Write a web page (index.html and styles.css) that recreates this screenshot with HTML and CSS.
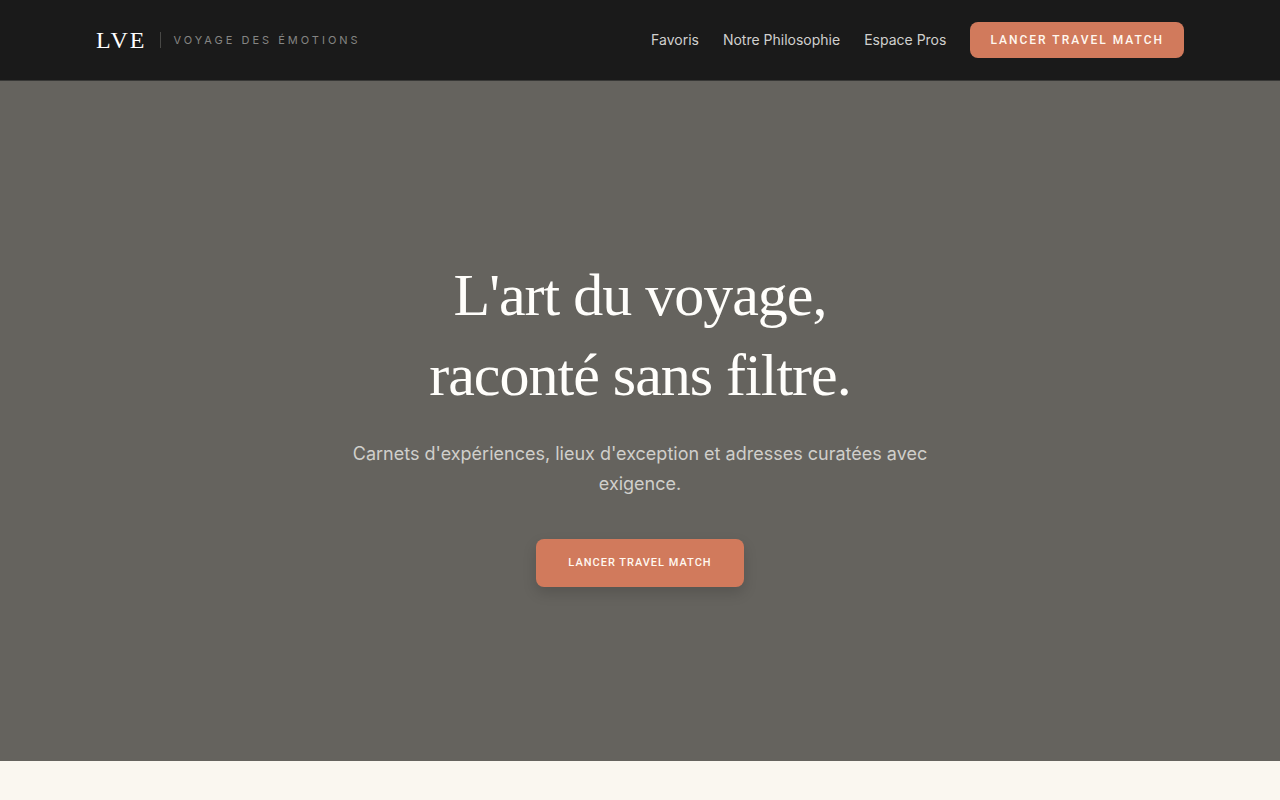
FILE: index.html
```html
<!DOCTYPE html>
<html lang="fr">
<head>
    <meta charset="UTF-8">
    <meta name="viewport" content="width=device-width, initial-scale=1">
    <title>LVE - Voyage des émotions</title>
    <link rel="stylesheet" href="styles.css">
</head>
<body>
<header class="header">
    <div class="header-inner">
        <a class="brand" href="#">
            <span class="logo">LVE</span>
            <span class="tagline">Voyage des émotions</span>
        </a>
        <nav class="nav">
            <a href="#">Favoris</a>
            <a href="#">Notre Philosophie</a>
            <a href="#">Espace Pros</a>
            <button class="btn btn-small" type="button">Lancer Travel Match</button>
        </nav>
    </div>
</header>
<main>
    <section class="hero">
        <h1>L'art du voyage,<br>raconté sans filtre.</h1>
        <p>Carnets d'expériences, lieux d'exception et adresses curatées avec exigence.</p>
        <button class="btn btn-large" type="button">Lancer Travel Match</button>
    </section>
</main>
</body>
</html>
```
FILE: styles.css
```css
*{
    margin: 0;
    padding: 0;
    box-sizing: border-box;
}
body{
    background: #faf7f0;
    color: #1a1a1a;
    font-family: Inter, "Liberation Sans", sans-serif;
}
a{
    color: inherit;
    text-decoration: none;
}
.header{
    background: #1a1a1a;
    border-bottom: 1px solid #383836;
}
.header-inner{
    display: flex;
    align-items: center;
    justify-content: space-between;
    max-width: 1152px;
    min-height: 80px;
    margin: 0 auto;
    padding: 0 32px;
}
.brand{
    display: flex;
    align-items: center;
    gap: 14px;
}
.logo{
    color: #fff;
    font-family: "Liberation Serif", serif;
    font-size: 24px;
    line-height: 32px;
    letter-spacing: 2px;
}
.tagline{
    padding-left: 12px;
    border-left: 1px solid #484846;
    color: #858583;
    font-size: 11px;
    line-height: 16px;
    letter-spacing: 3px;
    text-transform: uppercase;
}
.nav{
    display: flex;
    align-items: center;
    gap: 24px;
    color: #d0d0ce;
    font-size: 14px;
    line-height: 20px;
}
.btn{
    border: none;
    border-radius: 8px;
    background: #d17a5c;
    color: #fff8f0;
    font-family: Roboto, sans-serif;
    font-weight: 500;
    text-transform: uppercase;
    cursor: pointer;
}
.btn-small{
    padding: 10px 20px;
    font-size: 12px;
    line-height: 16px;
    letter-spacing: 2px;
}
.btn-large{
    padding: 16px 32px;
    font-size: 11px;
    line-height: 16px;
    letter-spacing: 1px;
    box-shadow: 0 6px 14px rgba(0,0,0,.15);
}
.hero{
    display: flex;
    flex-direction: column;
    align-items: center;
    justify-content: center;
    min-height: 85vh;
    padding: 0 32px;
    background: #65635e;
    text-align: center;
}
.hero h1{
    margin-bottom: 24px;
    color: #fffefb;
    font-family: "Liberation Serif", serif;
    font-size: 60px;
    font-weight: 400;
    line-height: 80px;
    letter-spacing: -1px;
}
.hero p{
    max-width: 576px;
    margin-bottom: 40px;
    color: #d0cfcb;
    font-size: 18px;
    line-height: 30px;
}
```
